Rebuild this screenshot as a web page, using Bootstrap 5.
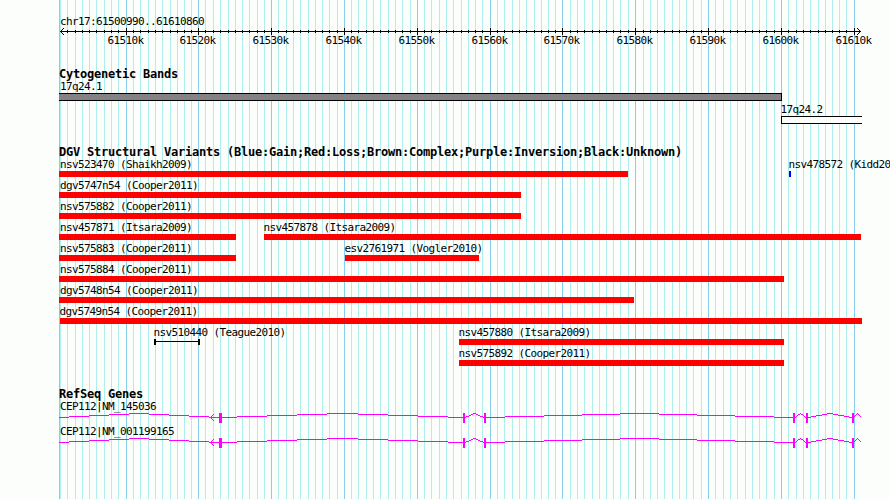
<!DOCTYPE html>
<html lang="en">
<head>
    <meta charset="UTF-8">
    <meta name="viewport" content="width=device-width, initial-scale=1.0">
    <title>chr17:61500990..61610860</title>
    <link href="https://cdn.jsdelivr.net/npm/bootstrap@5.3.0/dist/css/bootstrap.min.css" rel="stylesheet">
    <style>
        body {
            background: #fcfefc;
            color: #000;
            font-family: "DejaVu Sans Mono", "Liberation Mono", monospace;
            font-size: 11px;
            line-height: 12px;
            letter-spacing: -0.622px;
        }
        .browser {
            width: 890px;
            height: 499px;
        }
        .grid-lines, .gene-line, .ruler {
            display: block;
            shape-rendering: crispEdges;
        }
        .tracks { padding-top: 16px; }
        .region-name { padding-left: 60px; height: 12px; }
        .ruler-labels { height: 33px; }
        .ruler-labels span { width: 36px; }
        .track-title {
            font-size: 12px;
            font-weight: 700;
            letter-spacing: -0.224px;
            padding-left: 59px;
            height: 13px;
        }
        .lane { height: 21px; }
        .band-lane { height: 23px; }
        .feature { flex: none; }
        .feature-label { height: 12px; margin-left: -0.5px; }
        .from-edge .feature-label { margin-left: 1px; }
        .feature-bar { height: 6px; }
        .loss { background: #f00; }
        .gain { background: #00f; }
        .band { height: 8px; border: 1px solid #000; }
        .band-dark { background: #848284; border-left: 0; }
        .band-light { background: #fcfefc; border-right: 0; }
        .unknown {
            border: solid #000;
            border-width: 0 2px;
            background: linear-gradient(#000, #000) 0 2px / 100% 1px no-repeat;
        }
        .band-track { height: 65px; }
        .variant-track { height: 229px; }
        .gene { height: 25px; }
        .gene-label { padding-left: 60px; height: 12px; }
    </style>
</head>
<body>
    <div class="browser position-relative overflow-hidden">
        <svg class="grid-lines position-absolute top-0 start-0" id="gridLines" width="890" height="499"></svg>
        <div class="tracks position-relative text-nowrap">
            <div class="region-name">chr17:61500990..61610860</div>
            <svg class="ruler" id="ruler" width="890" height="7"></svg>
            <div class="ruler-labels d-flex" id="rulerLabels"></div>

            <div class="track-title">Cytogenetic Bands</div>
            <div class="band-track" id="bandTrack"></div>

            <div class="track-title">DGV Structural Variants (Blue:Gain;Red:Loss;Brown:Complex;Purple:Inversion;Black:Unknown)</div>
            <div class="variant-track" id="variantTrack"></div>

            <div class="track-title">RefSeq Genes</div>
            <div id="geneTrack"></div>
        </div>
    </div>

    <script src="https://cdn.jsdelivr.net/npm/bootstrap@5.3.0/dist/js/bootstrap.bundle.min.js"></script>
    <script>
        const major = [126, 198, 271, 344, 417, 490, 562, 635, 708, 781, 854];
        const minor = [60, 67, 75, 82, 89, 96, 104, 111, 118,
            133, 140, 148, 155, 162, 170, 177, 184, 191,
            205, 213, 220, 228, 235, 242, 249, 257, 264,
            278, 286, 293, 300, 308, 315, 322, 329, 337,
            351, 358, 366, 373, 380, 388, 395, 402, 410,
            424, 431, 439, 446, 453, 461, 468, 475, 482,
            497, 504, 512, 519, 526, 534, 541, 548, 555,
            570, 577, 584, 592, 599, 606, 613, 620, 628,
            643, 650, 657, 664, 672, 679, 686, 693, 701,
            715, 723, 730, 737, 745, 752, 759, 766, 774,
            788, 796, 803, 810, 818, 825, 832, 839, 846];

        const rect = (x, y, w, h, fill) => `<rect x="${x}" y="${y}" width="${w}" height="${h}" fill="${fill}"/>`;

        document.getElementById('gridLines').innerHTML =
            minor.map(x => rect(x, 0, 1, 499, '#afeeee')).join('') +
            [59, ...major].map(x => rect(x, 0, 1, 499, '#87ceeb')).join('');

        document.getElementById('ruler').innerHTML =
            rect(60, 3, 801, 1, '#000') +
            minor.slice(1).map(x => rect(x, 2, 1, 3, '#000')).join('') +
            major.map(x => rect(x, 0, 1, 7, '#000')).join('') +
            [1, 2, 3].map(i => rect(60 + i, 3 - i, 1, 1, '#000') + rect(60 + i, 3 + i, 1, 1, '#000') +
                rect(860 - i, 3 - i, 1, 1, '#000') + rect(860 - i, 3 + i, 1, 1, '#000')).join('');

        let end = 0;
        document.getElementById('rulerLabels').innerHTML = major.map((x, i) => {
            const gap = x - 18.5 - end;
            end = x + 17.5;
            return `<span style="margin-left: ${gap}px">${61510 + i * 10}k</span>`;
        }).join('');

        // each feature: label, start, end, classes
        function drawLanes(id, lanes, laneClass) {
            document.getElementById(id).innerHTML = lanes.map(lane => {
                let pos = 0;
                return `<div class="d-flex ${laneClass}">` + lane.map(([label, from, to, kind]) => {
                    const gap = from - pos;
                    pos = to;
                    return `<div class="feature ${from === 59 ? 'from-edge' : ''}" style="margin-left: ${gap}px; width: ${to - from}px">
                        <div class="feature-label">${label}</div>
                        <div class="${kind}"></div>
                    </div>`;
                }).join('') + '</div>';
            }).join('');
        }

        drawLanes('bandTrack', [
            [['17q24.1', 59, 782, 'band band-dark']],
            [['17q24.2', 781, 862, 'band band-light']]
        ], 'band-lane');

        const loss = 'feature-bar loss';
        drawLanes('variantTrack', [
            [['nsv523470 (Shaikh2009)', 59, 628, loss], ['nsv478572 (Kidd2008)', 789, 791, 'feature-bar gain']],
            [['dgv5747n54 (Cooper2011)', 59, 521, loss]],
            [['nsv575882 (Cooper2011)', 59, 521, loss]],
            [['nsv457871 (Itsara2009)', 59, 236, loss], ['nsv457878 (Itsara2009)', 264, 861, loss]],
            [['nsv575883 (Cooper2011)', 59, 236, loss], ['esv2761971 (Vogler2010)', 345, 479, loss]],
            [['nsv575884 (Cooper2011)', 59, 784, loss]],
            [['dgv5748n54 (Cooper2011)', 59, 634, loss]],
            [['dgv5749n54 (Cooper2011)', 60, 862, loss]],
            [['nsv510440 (Teague2010)', 154, 200, 'feature-bar unknown'], ['nsv457880 (Itsara2009)', 459, 784, loss]],
            [['nsv575892 (Cooper2011)', 459, 784, loss]]
        ], 'lane');

        // introns are drawn as shallow peaks between the exon boxes
        const exons = [[219, 3], [463, 2], [484, 2], [793, 2], [806, 2], [852, 2]];
        const introns = [[59, 219], [222, 463], [465, 484], [486, 793], [795, 806], [808, 852], [854, 861]];

        // one-pixel steps: 4 up to the peak, 4 down
        function intron([a, b]) {
            const mid = (a + b) / 2;
            let out = '';
            let start = a;
            for (let x = a; x < b; x++) {
                const y = Math.round(4 * Math.abs(x + 0.5 - mid) / (mid - a));
                const next = Math.round(4 * Math.abs(x + 1.5 - mid) / (mid - a));
                if (next !== y || x === b - 1) {
                    out += rect(start, y, x + 1 - start, 1, '#f0f');
                    start = x + 1;
                }
            }
            return out;
        }

        const geneShape = introns.map(intron).join('') +
            exons.map(([x, w]) => rect(x, 0, w, 10, '#f0f')).join('') +
            [1, 2, 3].map(i => rect(210 + i, 4 - i, 1, 1, '#f0f') + rect(210 + i, 4 + i, 1, 1, '#f0f')).join('');

        document.getElementById('geneTrack').innerHTML = ['CEP112|NM_145036', 'CEP112|NM_001199165'].map(name =>
            `<div class="gene"><div class="gene-label">${name}</div>
            <svg class="gene-line" width="890" height="11">${geneShape}</svg></div>`).join('');
    </script>
</body>
</html>
